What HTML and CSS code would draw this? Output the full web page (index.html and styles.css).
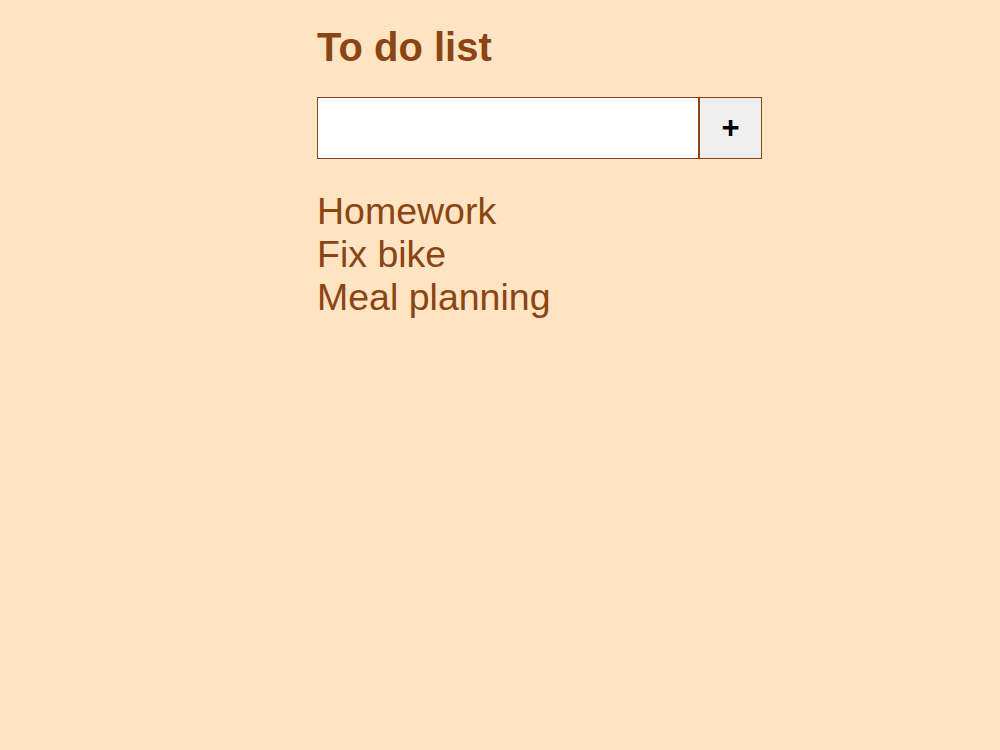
FILE: index.html
```html
<!DOCTYPE html>
<html lang="en">
<head>
<meta charset="UTF-8">
<meta name="viewport" content="width=device-width, initial-scale=1.0">
<title>To do list</title>
<link rel="stylesheet" href="styles.css">
</head>
<body>
<div class="todo">
  <h1 class="title">To do list</h1>

  <form class="add-form">
    <input type="text" class="add-input">
    <button type="button" class="add-button">+</button>
  </form>

  <ul class="items">
    <li>Homework</li>
    <li>Fix bike</li>
    <li>Meal planning</li>
  </ul>
</div>
</body>
</html>
```

FILE: styles.css
```css
  body {
    margin: 0;
    padding: 0;
    background: #ffe4c4;
    color: #8b4513;
    font-family: 'Liberation Sans', Arial, sans-serif;
  }

  .todo {
    padding: 24px 0 0 317px;
  }

  .title {
    margin: 0 0 27px;
    font-size: 40px;
    line-height: 46px;
    font-weight: bold;
  }

  .add-form {
    display: flex;
    margin: 0;
  }

  .add-input {
    box-sizing: border-box;
    width: 382px;
    height: 62px;
    margin: 0;
    padding: 0 8px;
    border: 1px solid #8b4513;
    background: white;
    font-size: 24px;
    font-family: inherit;
  }

  .add-button {
    box-sizing: border-box;
    width: 63px;
    height: 62px;
    margin: 0;
    padding: 0;
    border: 1px solid #8b4513;
    background: #efefef;
    color: black;
    font-size: 31px;
    font-weight: bold;
    font-family: inherit;
  }

  .items {
    list-style: none;
    margin: 31px 0 0;
    padding: 0;
    font-size: 37.5px;
    line-height: 43px;
  }
```
